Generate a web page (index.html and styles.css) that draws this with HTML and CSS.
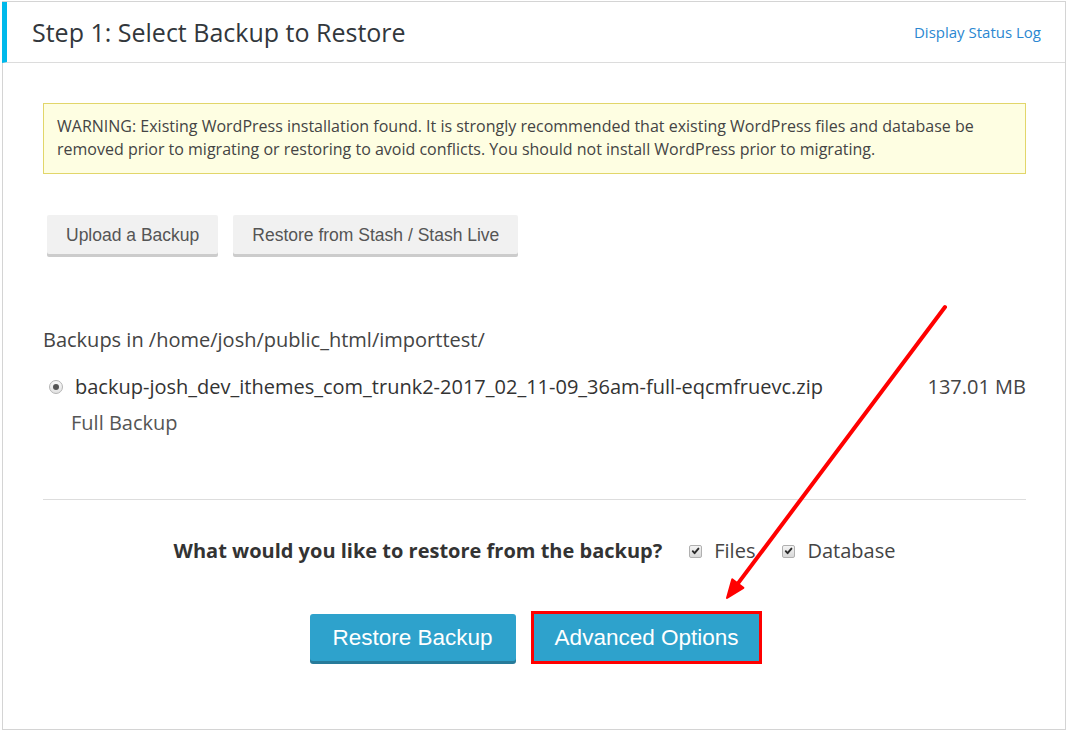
FILE: index.html
```html
<!DOCTYPE html>
<html lang="en">
<head>
<meta charset="utf-8">
<title>Select Backup to Restore</title>
<link rel="stylesheet" href="styles.css">
</head>
<body>
<div class="panel">
  <div class="panel-head">
    <h2 class="panel-title">Step 1: Select Backup to Restore</h2>
    <a class="status-link" href="#">Display Status Log</a>
  </div>
  <div class="panel-body">
    <div class="notice">WARNING: Existing WordPress installation found. It is strongly recommended that existing WordPress files and database be removed prior to migrating or restoring to avoid conflicts. You should not install WordPress prior to migrating.</div>

    <div class="source-buttons">
      <button class="btn-secondary">Upload a Backup</button>
      <button class="btn-secondary">Restore from Stash / Stash Live</button>
    </div>

    <div class="backup-list">
      <div class="backup-path">Backups in /home/josh/public_html/importtest/</div>
      <div class="backup-row">
        <span class="radio"><span class="radio-dot"></span></span>
        <span class="backup-file">backup-josh_dev_ithemes_com_trunk2-2017_02_11-09_36am-full-eqcmfruevc.zip</span>
        <span class="backup-size">137.01 MB</span>
      </div>
      <div class="backup-type">Full Backup</div>
    </div>

    <hr class="divider">

    <div class="restore-choice">
      <span class="question">What would you like to restore from the backup?</span>
      <span class="check">
        <span class="checkbox"><svg viewBox="0 0 12 12" width="12" height="12"><path d="M3 6.2 L5 8.4 L9.2 3.4" fill="none" stroke="#2a2a2a" stroke-width="2.1" stroke-linecap="round" stroke-linejoin="round"/></svg></span>
        Files
      </span>
      <span class="check">
        <span class="checkbox"><svg viewBox="0 0 12 12" width="12" height="12"><path d="M3 6.2 L5 8.4 L9.2 3.4" fill="none" stroke="#2a2a2a" stroke-width="2.1" stroke-linecap="round" stroke-linejoin="round"/></svg></span>
        Database
      </span>
    </div>

    <div class="actions">
      <button class="btn-primary btn-restore">Restore Backup</button>
      <button class="btn-primary btn-marked">Advanced Options</button>
    </div>
  </div>

  <svg class="pointer-arrow" width="280" height="320" viewBox="0 0 280 320">
    <line x1="252" y1="15" x2="44.8" y2="291.6" stroke="#ff0000" stroke-width="4" stroke-linecap="round"/>
    <polygon points="34,306 50.4,295.8 39.2,287.4" fill="#ff0000" stroke="#ff0000" stroke-width="2" stroke-linejoin="round"/>
  </svg>
</div>
</body>
</html>
```

FILE: styles.css
```css
html, body {
  margin: 0;
  padding: 0;
  background: #ffffff;
}

body {
  font-family: "Open Sans", "Noto Sans", sans-serif;
  color: #444444;
  padding: 1px 0 0 2px;
}

.panel {
  position: relative;
  box-sizing: border-box;
  width: 1064px;
  height: 729px;
  border: 1px solid #d4d4d4;
  background: #ffffff;
}

.panel-head {
  display: flex;
  align-items: center;
  justify-content: space-between;
  height: 60px;
  margin-left: -1px;
  border-left: 5px solid #00b9eb;
  border-bottom: 1px solid #dcdcdc;
  padding: 0 24px 0 25px;
}

.panel-title {
  margin: 0;
  font-weight: 400;
  font-size: 25px;
  color: #32373c;
}

.status-link {
  font-size: 15px;
  color: #2b87d1;
  text-decoration: none;
}

.panel-body {
  padding: 40px 39px 0 40px;
}

.notice {
  background: #fefee2;
  border: 1px solid #e2d66a;
  padding: 11px 13px 12px 13px;
  font-size: 16px;
  line-height: 23px;
  color: #444444;
}

.source-buttons {
  display: flex;
  gap: 15px;
  margin: 41px 0 0 4px;
}

.btn-secondary {
  font-family: "Liberation Sans", Arial, sans-serif;
  font-size: 17.5px;
  color: #555555;
  background: #f1f1f1;
  border: 0;
  border-radius: 2px;
  height: 39px;
  padding: 2px 19px 0 19px;
  box-shadow: 0 3px 0 #cccccc;
}

.backup-list {
  margin-top: 73px;
  font-size: 20px;
  line-height: 26px;
}

.backup-path {
  color: #444444;
}

.backup-row {
  display: flex;
  align-items: center;
  margin-top: 21px;
}

.radio {
  display: flex;
  align-items: center;
  justify-content: center;
  box-sizing: border-box;
  width: 14px;
  height: 14px;
  margin: 0 12px 0 6px;
  border-radius: 50%;
  border: 1px solid #b4b4b4;
  background: linear-gradient(#fafafa, #e2e2e2);
}

.radio-dot {
  width: 6px;
  height: 6px;
  border-radius: 50%;
  background: #555555;
}

.backup-file {
  flex: 1;
  color: #333333;
}

.backup-size {
  color: #444444;
}

.backup-type {
  margin: 10px 0 0 28px;
  color: #555555;
}

.divider {
  margin: 63px 0 0 0;
  border: 0;
  border-top: 1px solid #dddddd;
  height: 0;
}

.restore-choice {
  display: flex;
  justify-content: center;
  align-items: center;
  margin-top: 38px;
  font-size: 20px;
  line-height: 26px;
  color: #444444;
}

.question {
  font-weight: 700;
  font-size: 20px;
  color: #333333;
  margin-right: 27px;
}

.check {
  display: flex;
  align-items: center;
  margin-right: 27px;
}

.check:last-child {
  margin-right: 0;
}

.checkbox {
  display: flex;
  align-items: center;
  justify-content: center;
  box-sizing: border-box;
  width: 13px;
  height: 13px;
  margin-right: 12px;
  border: 1px solid #b0b0b0;
  border-radius: 2px;
  background: linear-gradient(#f4f4f4, #d8d8d8);
}

.actions {
  display: flex;
  justify-content: center;
  gap: 18px;
  margin-top: 50px;
}

.btn-primary {
  font-family: "Liberation Sans", Arial, sans-serif;
  font-size: 22.5px;
  color: #ffffff;
  background: #2ea2cc;
  border: 0;
  border-radius: 3px;
  height: 47px;
  padding: 0 21px;
  box-shadow: 0 3px 0 #277b9a;
}

.btn-restore {
  padding: 0 23px;
}

.btn-marked {
  border-radius: 0;
  outline: 3px solid #ff0000;
}

.pointer-arrow {
  position: absolute;
  left: 690px;
  top: 290px;
  pointer-events: none;
}
```
